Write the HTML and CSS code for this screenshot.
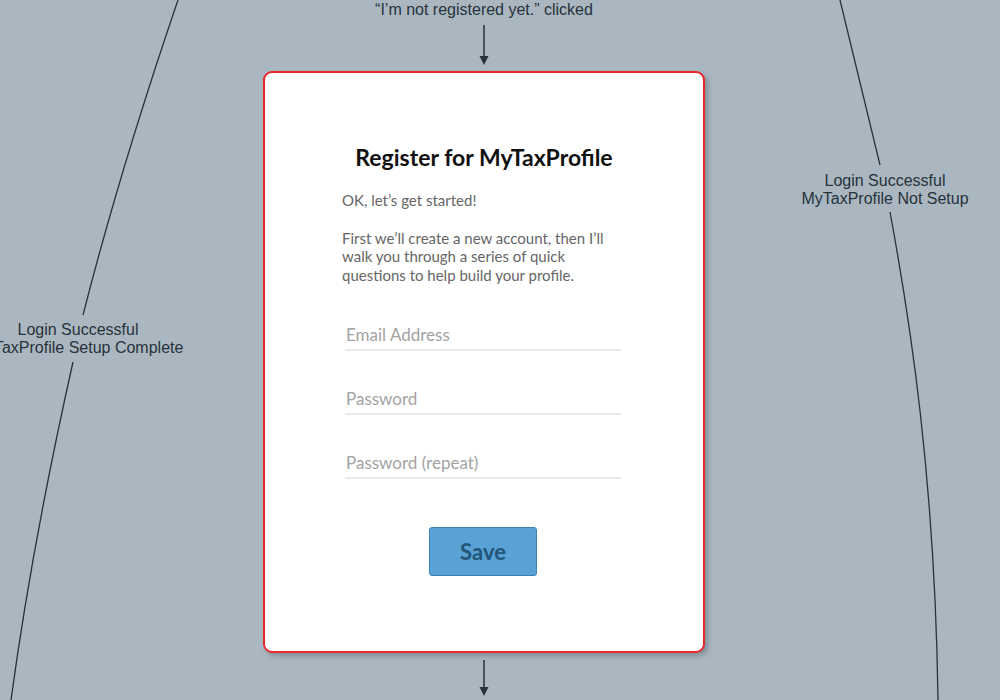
FILE: index.html
```html
<!DOCTYPE html>
<html lang="en">
<head>
<meta charset="utf-8">
<title>Register for MyTaxProfile</title>
<link rel="stylesheet" href="styles.css">
</head>
<body>
<div class="canvas">
  <svg class="edges" width="1000" height="700" viewBox="0 0 1000 700">
    <path d="M178,0 Q120,170 83,315" />
    <path d="M73,362 C60,420 30,560 11,700" />
    <path d="M840,0 L880,165" />
    <path d="M890,212 C910,320 935,480 938,700" />
  </svg>
  <div class="edge-label edge-left">Login Successful<br>MyTaxProfile Setup Complete</div>
  <div class="edge-label edge-right">Login Successful<br>MyTaxProfile Not Setup</div>

  <div class="flow">
    <div class="flow-label">“I’m not registered yet.” clicked</div>
    <svg class="arrow arrow-top" width="12" height="46" viewBox="0 0 12 46">
      <line x1="6" y1="6" x2="6" y2="38" />
      <polygon points="1.5,37 10.5,37 6,46" />
    </svg>
    <div class="card">
      <h1 class="card-title">Register for MyTaxProfile</h1>
      <div class="card-body">
        <p class="intro">OK, let’s get started!</p>
        <p class="intro">First we’ll create a new account, then I’ll walk you through a series of quick questions to help build your profile.</p>
        <div class="fields">
          <input class="field" type="email" placeholder="Email Address">
          <input class="field" type="password" placeholder="Password">
          <input class="field" type="password" placeholder="Password (repeat)">
        </div>
        <div class="actions">
          <button class="save-btn" type="button">Save</button>
        </div>
      </div>
    </div>
    <svg class="arrow arrow-bottom" width="12" height="40" viewBox="0 0 12 40">
      <line x1="6" y1="0" x2="6" y2="28" />
      <polygon points="1.5,27 10.5,27 6,36" />
    </svg>
  </div>
</div>
</body>
</html>
```

FILE: styles.css
```css
html, body {
  margin: 0;
  padding: 0;
  width: 1000px;
  height: 700px;
  overflow: hidden;
  background: #aab7c0;
}

.canvas {
  position: relative;
  width: 1000px;
  height: 700px;
  font-family: "Liberation Sans", Arial, sans-serif;
  color: #27323b;
}

.edges {
  position: absolute;
  left: 0;
  top: 0;
}

.edges path {
  fill: none;
  stroke: #27323b;
  stroke-width: 1.3;
}

.edge-label {
  position: absolute;
  width: 260px;
  text-align: center;
  font-size: 16px;
  line-height: 18px;
  white-space: nowrap;
}

.edge-left {
  left: -52px;
  top: 321px;
}

.edge-right {
  left: 755px;
  top: 172px;
}

.flow {
  position: relative;
  width: 442px;
  margin-left: 263px;
  display: flex;
  flex-direction: column;
  align-items: center;
}

.flow-label {
  font-size: 16px;
  line-height: 18px;
  padding-top: 1px;
  white-space: nowrap;
}

.arrow line {
  stroke: #27323b;
  stroke-width: 1.5;
}

.arrow polygon {
  fill: #27323b;
}

.arrow-top {
  margin-top: 0;
  margin-bottom: 6px;
}

.arrow-bottom {
  margin-top: 7px;
}

.card {
  box-sizing: border-box;
  width: 442px;
  height: 582px;
  background: #ffffff;
  border: 2px solid #e8282c;
  border-radius: 9px;
  box-shadow: 3px 3px 5px rgba(40, 50, 60, 0.3);
  padding-top: 70px;
  font-family: Lato, "Open Sans", sans-serif;
}

.card-title {
  margin: 0;
  text-align: center;
  font-size: 23px;
  line-height: 28px;
  font-weight: 700;
  color: #111111;
}

.card-body {
  width: 284px;
  margin: 20px auto 0;
}

.intro {
  margin: 0 0 19px;
  font-size: 15px;
  line-height: 18.5px;
  font-weight: 400;
  color: #666666;
}

.fields {
  display: flex;
  flex-direction: column;
  gap: 32px;
  margin-top: 35px;
  padding-left: 3px;
}

.field {
  box-sizing: border-box;
  display: block;
  width: 276px;
  height: 32px;
  margin: 0;
  padding: 0 0 0 1px;
  border: none;
  border-bottom: 2px solid #e9e9e9;
  outline: none;
  background: transparent;
  font-family: Lato, "Open Sans", sans-serif;
  font-size: 17px;
  font-weight: 400;
  color: #333333;
}

.field::placeholder {
  color: #a3a3a3;
  opacity: 1;
}

.actions {
  display: flex;
  justify-content: center;
  margin-top: 48px;
  padding-right: 2px;
}

.save-btn {
  box-sizing: border-box;
  width: 108px;
  height: 49px;
  background: #58a2d6;
  border: 1px solid #3b82bb;
  border-radius: 3px;
  font-family: Lato, "Open Sans", sans-serif;
  font-size: 22px;
  font-weight: 700;
  color: #235679;
  padding: 0;
}
```
